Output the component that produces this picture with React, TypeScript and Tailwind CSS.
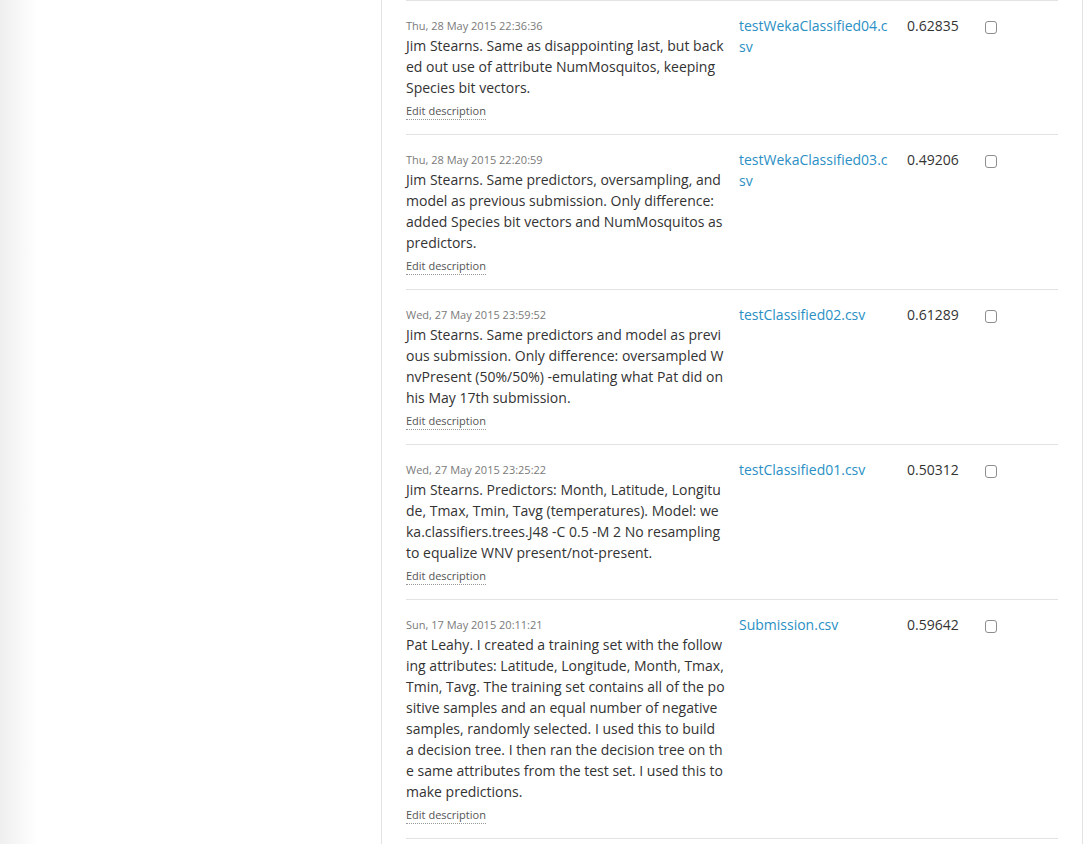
import type { HTMLAttributes } from "react"

type Submission = {
  date: string
  description: string
  file: string
  score: string
}

const submissions: Submission[] = [
  {
    date: "Thu, 28 May 2015 22:36:36",
    description:
      "Jim Stearns. Same as disappointing last, but backed out use of attribute NumMosquitos, keeping Species bit vectors.",
    file: "testWekaClassified04.csv",
    score: "0.62835",
  },
  {
    date: "Thu, 28 May 2015 22:20:59",
    description:
      "Jim Stearns. Same predictors, oversampling, and model as previous submission. Only difference: added Species bit vectors and NumMosquitos as predictors.",
    file: "testWekaClassified03.csv",
    score: "0.49206",
  },
  {
    date: "Wed, 27 May 2015 23:59:52",
    description:
      "Jim Stearns. Same predictors and model as previous submission. Only difference: oversampled WnvPresent (50%/50%) -emulating what Pat did on his May 17th submission.",
    file: "testClassified02.csv",
    score: "0.61289",
  },
  {
    date: "Wed, 27 May 2015 23:25:22",
    description:
      "Jim Stearns. Predictors: Month, Latitude, Longitude, Tmax, Tmin, Tavg (temperatures). Model: weka.classifiers.trees.J48 -C 0.5 -M 2 No resampling to equalize WNV present/not-present.",
    file: "testClassified01.csv",
    score: "0.50312",
  },
  {
    date: "Sun, 17 May 2015 20:11:21",
    description:
      "Pat Leahy. I created a training set with the following attributes: Latitude, Longitude, Month, Tmax, Tmin, Tavg. The training set contains all of the positive samples and an equal number of negative samples, randomly selected. I used this to build a decision tree. I then ran the decision tree on the same attributes from the test set. I used this to make predictions.",
    file: "Submission.csv",
    score: "0.59642",
  },
]

type RowProps = { item: Submission } & HTMLAttributes<HTMLDivElement>

function SubmissionRow({ item, ...rest }: RowProps) {
  return (
    <div {...rest} className="flex flex-row border-b border-[#e3e3e3] pt-[16px] pb-[14px]">
      <div className="w-[333px] pr-[14px]">
        <div className="text-[11px] leading-[18px] text-[#7a7a7a]">{item.date}</div>
        <div className="text-[14px] leading-[21px] text-[#333] break-all">{item.description}</div>
        <div className="mt-[4px] text-[11px] leading-[18px] text-[#555]">
          <span className="border-b border-dotted border-[#999] pb-[1px] cursor-pointer">Edit description</span>
        </div>
      </div>
      <div className="w-[168px] pr-[15px] -mt-[2px] text-[14px] leading-[21px] break-all">
        <a className="text-[#2a8fc4] cursor-pointer">{item.file}</a>
      </div>
      <div className="w-[78px] -mt-[2px] text-[14px] leading-[21px] text-[#333]">{item.score}</div>
      <div>
        <div className="mt-[4px] h-[13px] w-[12px] rounded-[3px] border border-[#8e8e8e] bg-white" />
      </div>
    </div>
  )
}

export default function App() {
  return (
    <div
      className="flex flex-row h-[844px] w-[1087px] overflow-hidden bg-white"
      style={{ fontFamily: '"Open Sans", "Liberation Sans", sans-serif' }}
    >
      <div className="w-[382px] h-full flex-none bg-gradient-to-r from-[#efefef] to-white to-[38px] border-r border-[#e2e2e2]" />
      <div className="w-[701px] h-full flex-none border-r border-[#e2e2e2] pl-[24px] pr-[24px]">
        <div className="border-t border-[#e3e3e3]">
          {submissions.map((item) => (
            <SubmissionRow key={item.date} item={item} />
          ))}
        </div>
      </div>
    </div>
  )
}
